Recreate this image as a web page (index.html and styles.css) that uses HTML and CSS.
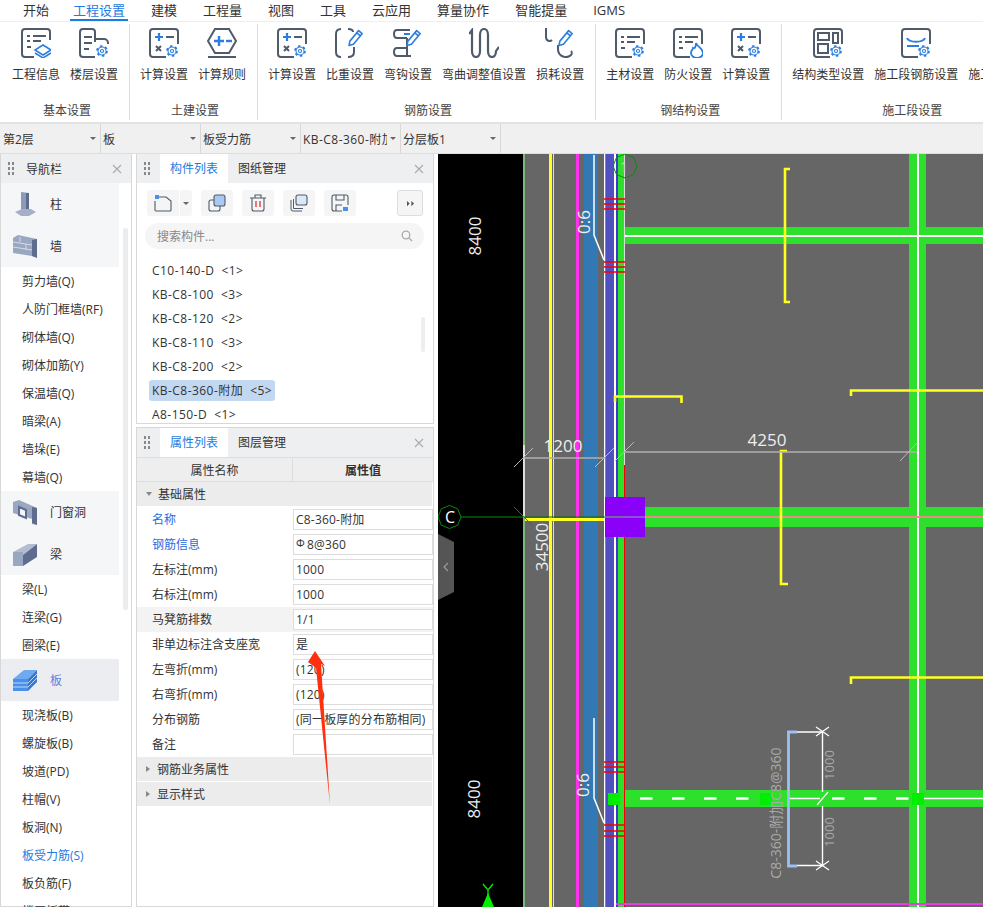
FILE: index.html
```html
<!DOCTYPE html>
<html lang="zh">
<head>
<meta charset="utf-8">
<title>工程设置</title>
<link rel="stylesheet" href="styles.css">
</head>
<body>
<svg class="defs" width="0" height="0">
  <symbol id="gear" viewBox="0 0 16 16">
    <circle cx="8" cy="8" r="5.4" fill="#fff" stroke="#2b7de0" stroke-width="2.6" stroke-dasharray="2.6 3.05"/>
    <circle cx="8" cy="8" r="4.6" fill="#fff" stroke="#2b7de0" stroke-width="1.2"/>
    <circle cx="8" cy="8" r="1.8" fill="none" stroke="#2b7de0" stroke-width="1.2"/>
  </symbol>
  <symbol id="frame" viewBox="0 0 30 30">
    <path d="M29 16V4a3 3 0 0 0-3-3H4a3 3 0 0 0-3 3v22a3 3 0 0 0 3 3h13" fill="none" stroke="#4f5a6b" stroke-width="2"/>
  </symbol>
  <symbol id="list" viewBox="0 0 30 30">
    <path d="M6 9h3M12 9h13M6 14h3M12 14h8M6 20h4" fill="none" stroke="#4f5a6b" stroke-width="2"/>
  </symbol>
  <symbol id="calc" viewBox="0 0 30 30">
    <use href="#frame" width="30" height="30"/>
    <path d="M6 9h8M10 5v8" fill="none" stroke="#2b7de0" stroke-width="2.2"/>
    <path d="M17 9h8M7 18l5 5M12 18l-5 5" fill="none" stroke="#4f5a6b" stroke-width="2"/>
    <use href="#gear" x="16" y="16" width="14" height="14"/>
  </symbol>
  <symbol id="pencil" viewBox="0 0 20 24">
    <path d="M3 15 13 3l4 3.500L7 18.500l-5 1.500zM11 5.500l4 3.500" fill="#fff" stroke="#2b7de0" stroke-width="1.800" stroke-linejoin="round"/>
  </symbol>
</svg>

<div class="app">
  <nav class="menu">
    <span class="menu-item menu-first">开始</span>
    <span class="menu-item menu-active">工程设置</span>
    <span class="menu-item">建模</span>
    <span class="menu-item">工程量</span>
    <span class="menu-item">视图</span>
    <span class="menu-item">工具</span>
    <span class="menu-item">云应用</span>
    <span class="menu-item">算量协作</span>
    <span class="menu-item">智能提量</span>
    <span class="menu-item">IGMS</span>
  </nav>

  <section class="ribbon">
    <div class="group">
      <div class="group-btns">
        <div class="rb"><svg class="ico" viewBox="0 0 30 30"><path d="M29 12V4a3 3 0 0 0-3-3H4a3 3 0 0 0-3 3v22a3 3 0 0 0 3 3h9" fill="none" stroke="#4f5a6b" stroke-width="2"/><use href="#list" width="30" height="30" y="-1"/><path d="M22 17l8 5-8 5-8-5zM14 25l8 5 8-5" fill="#fff" stroke="#2b7de0" stroke-width="1.500"/></svg><span>工程信息</span></div>
        <div class="rb"><svg class="ico" viewBox="0 0 30 30"><path d="M16 14V4a3 3 0 0 0-3-3H4a3 3 0 0 0-3 3v22a3 3 0 0 0 3 3h12M16 11h9a4 4 0 0 1 4 4v1" fill="none" stroke="#4f5a6b" stroke-width="2"/><path d="M5 9h8M5 15h8M5 21h5" fill="none" stroke="#4f5a6b" stroke-width="2"/><use href="#gear" x="16" y="16" width="14" height="14"/></svg><span>楼层设置</span></div>
      </div>
      <div class="group-title">基本设置</div>
    </div>
    <div class="group">
      <div class="group-btns">
        <div class="rb"><svg class="ico" viewBox="0 0 30 30"><use href="#calc" width="30" height="30"/></svg><span>计算设置</span></div>
        <div class="rb"><svg class="ico" viewBox="0 0 30 30"><path d="M8 1h14l7 12-7 12H8L1 13zM1 29h28" fill="none" stroke="#4f5a6b" stroke-width="2"/><path d="M7 13h10M12 8v10" fill="none" stroke="#2b7de0" stroke-width="2.400"/><path d="M19 13h6" fill="none" stroke="#2b7de0" stroke-width="2.400"/></svg><span>计算规则</span></div>
      </div>
      <div class="group-title">土建设置</div>
    </div>
    <div class="group">
      <div class="group-btns">
        <div class="rb"><svg class="ico" viewBox="0 0 30 30"><use href="#calc" width="30" height="30"/></svg><span>计算设置</span></div>
        <div class="rb"><svg class="ico" viewBox="0 0 30 30"><path d="M6 1C2 1 1 3 1 6v18c0 4 2 5 5 5M13 1c3 0 5 1 5 3M19 19v5c0 3-2 5-6 5" fill="none" stroke="#4f5a6b" stroke-width="2"/><use href="#pencil" x="12" y="0" width="18" height="21"/></svg><span>比重设置</span></div>
        <div class="rb"><svg class="ico" viewBox="0 0 30 30"><path d="M17 2H4C0 2 0 10 4 10h10M14 20H4c-4 0-4 8 0 8h14M14 10v18" fill="none" stroke="#4f5a6b" stroke-width="2"/><path d="M11 6h6" stroke="#2b7de0" stroke-width="2"/><use href="#pencil" x="12" y="0" width="18" height="21"/></svg><span>弯钩设置</span></div>
        <div class="rb"><svg class="ico" viewBox="0 0 30 30"><path d="M0 6l3-4v21c0 8 8 8 8 0V7c0-8 8-8 8 0v16c0 8 8 8 8 0l3-4" fill="none" stroke="#4f5a6b" stroke-width="2.200"/></svg><span>弯曲调整值设置</span></div>
        <div class="rb"><svg class="ico" viewBox="0 0 30 30"><path d="M1 0v9c0 4 4 5 6 3M13 17v4c0 8 9 10 13 6 1-1 1-3 0-4" fill="none" stroke="#4f5a6b" stroke-width="2"/><use href="#pencil" x="12" y="0" width="18" height="21"/></svg><span>损耗设置</span></div>
      </div>
      <div class="group-title">钢筋设置</div>
    </div>
    <div class="group">
      <div class="group-btns">
        <div class="rb"><svg class="ico" viewBox="0 0 30 30"><use href="#frame" width="30" height="30"/><use href="#list" width="30" height="30"/><use href="#gear" x="16" y="16" width="14" height="14"/></svg><span>主材设置</span></div>
        <div class="rb"><svg class="ico" viewBox="0 0 30 30"><use href="#frame" width="30" height="30"/><use href="#list" width="30" height="30"/><path d="M23 15c1 4 7 5 7 10a6 5 0 0 1-12 0c0-3 2-3 2-5 2 1 3-2 3-5z" fill="#fff" stroke="#2b7de0" stroke-width="1.800"/></svg><span>防火设置</span></div>
        <div class="rb"><svg class="ico" viewBox="0 0 30 30"><use href="#calc" width="30" height="30"/></svg><span>计算设置</span></div>
      </div>
      <div class="group-title">钢结构设置</div>
    </div>
    <div class="group group-last">
      <div class="group-btns">
        <div class="rb"><svg class="ico" viewBox="0 0 30 30"><use href="#frame" width="30" height="30"/><path d="M5 5h11v7H5zM5 16h10v9H5zM20 5h5v10h-5z" fill="none" stroke="#4f5a6b" stroke-width="2"/><use href="#gear" x="16" y="16" width="14" height="14"/></svg><span>结构类型设置</span></div>
        <div class="rb"><svg class="ico" viewBox="0 0 30 30"><use href="#frame" width="30" height="30"/><path d="M6 10c2 5 16 5 18 0M6 18h12" fill="none" stroke="#2b7de0" stroke-width="2"/><use href="#gear" x="16" y="16" width="14" height="14"/></svg><span>施工段钢筋设置</span></div>
        <div class="rb"><svg class="ico" viewBox="0 0 30 30"></svg><span>施工段设置</span></div>
      </div>
      <div class="group-title">施工段设置</div>
    </div>
  </section>

  <section class="selectors">
    <div class="sel"><span class="sel-text">第2层</span><i class="caret"></i></div>
    <div class="sel"><span class="sel-text">板</span><i class="caret"></i></div>
    <div class="sel"><span class="sel-text">板受力筋</span><i class="caret"></i></div>
    <div class="sel"><span class="sel-text sel-spaced">KB-C8-360-附加</span><i class="caret"></i></div>
    <div class="sel"><span class="sel-text">分层板1</span><i class="caret"></i></div>
  </section>

  <main class="work">
    <aside class="nav panel">
      <header class="phead">
        <i class="dots"></i><span class="nav-title">导航栏</span>
        <svg class="close" viewBox="0 0 10 10"><path d="M1 1l8 8M9 1l-8 8"/></svg>
      </header>
      <div class="nav-body">
        <div class="nav-scroll"></div>
        <div class="cat"><svg class="cat-ico" viewBox="0 0 24 26"><path d="M8 1l8 1v18H8z" fill="#8e9bb8"/><path d="M13 2h3v18h-3z" fill="#5e6c90"/><path d="M2 21l7-3h9l5 3-7 4H8z" fill="#a5b0c8"/></svg><span>柱</span></div>
        <div class="cat"><svg class="cat-ico" viewBox="0 0 24 26"><path d="M0 5l5-3 19 4v18l-5-1L0 20z" fill="#9aa7c0"/><path d="M19 7l5-1v19l-5-2z" fill="#5e6c90"/><path d="M0 9l19 3M0 14l19 3M7 4v5M13 11v6" stroke="#d4dae6" fill="none"/></svg><span>墙</span></div>
        <div class="sub">剪力墙(Q)</div>
        <div class="sub">人防门框墙(RF)</div>
        <div class="sub">砌体墙(Q)</div>
        <div class="sub">砌体加筋(Y)</div>
        <div class="sub">保温墙(Q)</div>
        <div class="sub">暗梁(A)</div>
        <div class="sub">墙垛(E)</div>
        <div class="sub">幕墙(Q)</div>
        <div class="cat"><svg class="cat-ico" viewBox="0 0 24 26"><path d="M0 3l6-2 18 8v17l-5-1V20L0 14z" fill="#9aa7c0"/><path d="M6 8l7 3v8l-7-3z" fill="#f5f6f8" stroke="#5e6c90" stroke-width="2"/><path d="M19 8l5 1v17l-5-2z" fill="#5e6c90"/></svg><span>门窗洞</span></div>
        <div class="cat"><svg class="cat-ico" viewBox="0 0 24 26"><path d="M0 11l15-8h9L10 14z" fill="#b4bdd0"/><path d="M0 11h10v14H0z" fill="#9aa7c0"/><path d="M10 14 24 3v13L10 25z" fill="#5e6c90"/></svg><span>梁</span></div>
        <div class="sub">梁(L)</div>
        <div class="sub">连梁(G)</div>
        <div class="sub">圈梁(E)</div>
        <div class="cat cat-on"><svg class="cat-ico" viewBox="0 0 24 26"><path d="M0 12 11 3h13L15 12z" fill="#6ea9f2"/><path d="M0 12h15v12H0z" fill="#4a90ea"/><path d="M15 12l9-9v12l-9 9z" fill="#3377d6"/><path d="M0 16h15M0 20h15M15 16l9-9M15 20l9-9" stroke="#bcd6f6" fill="none"/></svg><span>板</span></div>
        <div class="sub">现浇板(B)</div>
        <div class="sub">螺旋板(B)</div>
        <div class="sub">坡道(PD)</div>
        <div class="sub">柱帽(V)</div>
        <div class="sub">板洞(N)</div>
        <div class="sub sub-on">板受力筋(S)</div>
        <div class="sub">板负筋(F)</div>
        <div class="sub">楼层板带(H)</div>
      </div>
    </aside>

    <div class="mid">
      <section class="panel comp">
        <header class="phead">
          <i class="dots"></i>
          <span class="tab tab-on">构件列表</span><span class="tab">图纸管理</span>
          <svg class="close" viewBox="0 0 10 10"><path d="M1 1l8 8M9 1l-8 8"/></svg>
        </header>
        <div class="tools">
          <div class="tbtn tbtn-new"><svg class="tico" viewBox="0 0 18 18"><path d="M4 3h8l5 4v9a1 1 0 0 1-1 1H2a1 1 0 0 1-1-1V7" fill="none" stroke="#4f5a6b" stroke-width="1.100"/><path d="M1 1h4v4H1z" fill="#4a8fe8"/></svg></div>
          <div class="tbtn tbtn-caret"><i class="caret"></i></div>
          <div class="tbtn"><svg class="tico" viewBox="0 0 18 18"><rect x="1" y="6" width="11" height="11" rx="2" fill="none" stroke="#4f5a6b" stroke-width="1.100"/><rect x="6" y="1" width="11" height="11" rx="2" fill="#a9c9f2" stroke="#4f5a6b" stroke-width="1.100"/></svg></div>
          <div class="tbtn"><svg class="tico" viewBox="0 0 18 18"><path d="M1 4h16M6 4V1h6v3M3 4v11a2 2 0 0 0 2 2h8a2 2 0 0 0 2-2V4" fill="none" stroke="#4f5a6b" stroke-width="1.100"/><path d="M7 7v6M11 7v6" stroke="#e02020" stroke-width="1.200"/></svg></div>
          <div class="tbtn"><svg class="tico" viewBox="0 0 18 18"><path d="M1 6v9a2 2 0 0 0 2 2h9M3.500 5v9.500H13" fill="none" stroke="#4f5a6b" stroke-width="1"/><rect x="6" y="1" width="11" height="10" rx="2" fill="#dbe8f8" stroke="#4f5a6b" stroke-width="1.100"/></svg></div>
          <div class="tbtn"><svg class="tico" viewBox="0 0 18 18"><path d="M11 17H3a2 2 0 0 1-2-2V3a2 2 0 0 1 2-2h12a2 2 0 0 1 2 2v8M5 1v5h8V1M5 17v-6h6" fill="none" stroke="#4f5a6b" stroke-width="1.100"/><path d="M12 13h5v4h-5z" fill="#4a8fe8"/></svg></div>
          <div class="tbtn tbtn-more"><svg class="more" viewBox="0 0 10 8"><path d="M1 1l3 3-3 3zM6 1l3 3-3 3z" fill="#555"/></svg></div>
        </div>
        <div class="search"><span class="search-ph">搜索构件...</span><svg class="search-ico" viewBox="0 0 12 12"><circle cx="5" cy="5" r="3.800" fill="none" stroke="#aaa" stroke-width="1.300"/><path d="M8 8l3 3" stroke="#aaa" stroke-width="1.300"/></svg></div>
        <div class="list">
          <div class="list-scroll"></div>
          <div class="li"><span class="li-t">C10-140-D&nbsp;&nbsp;&lt;1&gt;</span></div>
          <div class="li"><span class="li-t">KB-C8-100&nbsp;&nbsp;&lt;3&gt;</span></div>
          <div class="li"><span class="li-t">KB-C8-120&nbsp;&nbsp;&lt;2&gt;</span></div>
          <div class="li"><span class="li-t">KB-C8-110&nbsp;&nbsp;&lt;3&gt;</span></div>
          <div class="li"><span class="li-t">KB-C8-200&nbsp;&nbsp;&lt;2&gt;</span></div>
          <div class="li"><span class="li-t li-on">KB-C8-360-附加&nbsp;&nbsp;&lt;5&gt;</span></div>
          <div class="li"><span class="li-t">A8-150-D&nbsp;&nbsp;&lt;1&gt;</span></div>
        </div>
      </section>

      <section class="panel props">
        <header class="phead">
          <i class="dots"></i>
          <span class="tab tab-on">属性列表</span><span class="tab">图层管理</span>
          <svg class="close" viewBox="0 0 10 10"><path d="M1 1l8 8M9 1l-8 8"/></svg>
        </header>
        <div class="thead"><div class="th-name">属性名称</div><div class="th-val">属性值</div></div>
        <div class="pgroup"><i class="tri tri-down"></i><span class="pg-t">基础属性</span></div>
        <div class="row"><div class="rn rn-blue">名称</div><div class="rv">C8-360-附加</div></div>
        <div class="row"><div class="rn rn-blue">钢筋信息</div><div class="rv"><span class="steel">Φ</span>8@360</div></div>
        <div class="row"><div class="rn">左标注(mm)</div><div class="rv">1000</div></div>
        <div class="row"><div class="rn">右标注(mm)</div><div class="rv">1000</div></div>
        <div class="row row-alt"><div class="rn">马凳筋排数</div><div class="rv">1/1</div></div>
        <div class="row"><div class="rn">非单边标注含支座宽</div><div class="rv">是</div></div>
        <div class="row"><div class="rn">左弯折(mm)</div><div class="rv">(120)</div></div>
        <div class="row"><div class="rn">右弯折(mm)</div><div class="rv">(120)</div></div>
        <div class="row"><div class="rn">分布钢筋</div><div class="rv">(同一板厚的分布筋相同)</div></div>
        <div class="row"><div class="rn">备注</div><div class="rv"></div></div>
        <div class="pgroup"><i class="tri"></i><span class="pg-t">钢筋业务属性</span></div>
        <div class="pgroup"><i class="tri"></i><span class="pg-t">显示样式</span></div>
      </section>
    </div>

    <div class="canvas">
      <svg class="cad" viewBox="438 154 545 753" width="545" height="753">
        <rect x="438" y="154" width="545" height="753" fill="#000"/>
        <rect x="524" y="154" width="459" height="753" fill="#666"/>

        <!-- horizontal beams -->
        <rect x="624" y="227" width="359" height="17" fill="#2ce02c"/>
        <rect x="645" y="507" width="338" height="20" fill="#2ce02c"/>
        <rect x="625" y="790" width="358" height="17" fill="#2ce02c"/>
        <rect x="909" y="154" width="17" height="753" fill="#2ce02c"/>
        <rect x="917" y="154" width="2" height="753" fill="#fff"/>
        <rect x="615" y="235" width="368" height="2" fill="#fff"/>
        <rect x="645" y="516" width="338" height="2" fill="#e88"/>

        <!-- vertical strips -->
        <rect x="523" y="154" width="2" height="753" fill="#7cb87c"/>
        <rect x="523" y="445" width="2" height="73" fill="#ddd"/>
        <rect x="549" y="154" width="3" height="753" fill="#ffff20"/>
        <rect x="553" y="154" width="1" height="753" fill="#ddd"/>
        <rect x="576" y="154" width="3" height="753" fill="#ff30f0"/>
        <rect x="584" y="154" width="14" height="753" fill="#3278b4"/>
        <rect x="604" y="154" width="1.500" height="753" fill="#fff"/>
        <rect x="605.500" y="154" width="8.500" height="753" fill="#5050c0"/>
        <rect x="614" y="154" width="2" height="753" fill="#fff"/>
        <rect x="616" y="154" width="2" height="753" fill="#3c3cc8"/>
        <rect x="618" y="154" width="6" height="753" fill="#2ce02c"/>
        <rect x="624" y="154" width="1" height="311" fill="#ddd"/>
        <rect x="624" y="465" width="1" height="442" fill="#f00000"/>

        <!-- magenta base line -->
        <rect x="616" y="903" width="367" height="2" fill="#e040e0"/>

        <!-- yellow brackets -->
        <path d="M790 169h-5v133h5M787 451h-6v133h7M615 402v-5.500h66.500v6.500M851 396v-5.500h132M851 684v-6.500h132" fill="none" stroke="#ffff20" stroke-width="2.600"/>
        <path d="M525 519.500h79" stroke="#ffff20" stroke-width="3"/>

        <!-- purple column -->
        <rect x="605" y="497" width="40" height="40" fill="#8a00f8"/>
        <path d="M525 517h100" stroke="#0a6a0a" stroke-width="1"/>
        <path d="M605 517h40" stroke="#9a9ac8" stroke-width="1"/>

        <!-- red ticks -->
        <path d="M604 199h21M604 204h21M604 209h21M604 262h21M604 267h21M604 272h21M604 762h20M604 767h20M604 772h20M604 825h20M604 831h20M604 836h20" stroke="#f40000" stroke-width="1.600"/>

        <!-- leaders -->
        <path d="M594 155v80l10 25M594 718v80l10 25" fill="none" stroke="#fff" stroke-width="1.500"/>
        <text class="cad-t" transform="rotate(-90 583 222)" x="583" y="222">0:6</text>
        <text class="cad-t" transform="rotate(-90 582 785)" x="582" y="785">0:6</text>

        <!-- dimensions -->
        <path d="M523 458h82M624 452h293" stroke="#b0b0b0" stroke-width="1.400"/>
        <path d="M514 467l19-19M595 467l19-19M615 461l19-19M900 461l17-18" stroke="#bbb" stroke-width="1"/>
        <text class="cad-t" x="563" y="445">1200</text>
        <text class="cad-t" x="767" y="439">4250</text>
        <text class="cad-t" transform="rotate(-90 541 547)" x="541" y="547">34500</text>
        <text class="cad-t" transform="rotate(-90 474 236)" x="474" y="236">8400</text>
        <text class="cad-t" transform="rotate(-90 473 799)" x="473" y="799">8400</text>

        <!-- axis bubbles -->
        <path d="M637 166l-3.500-8.500-8.500-3.500-8.500 3.500-3.500 8.500 3.500 8.500 8.500 3.500 8.500-3.500z" fill="none" stroke="#0a8a0a"/>
        <text class="cad-a" x="624" y="166">1</text>
        <path d="M461 517l-3.400-8.200-8.100-3.300-8.100 3.300-3.400 8.200 3.400 8.200 8.100 3.300 8.100-3.300zM461 517h64M514 507l19 19" fill="none" stroke="#0a8a0a"/>
        <text class="cad-a cad-c" x="450" y="517">C</text>

        <!-- rebar with dashes -->
        <path d="M640 798.500h124" stroke="#fff" stroke-width="2.600" stroke-dasharray="12.500 19.500"/>
        <path d="M832 798.500h77" stroke="#fff" stroke-width="2.600" stroke-dasharray="12.500 19.500"/>
        <path d="M788 798.500h32M924 798.500h59" stroke="#fff" stroke-width="1.600"/>
        <rect x="608" y="793" width="12" height="12" fill="#00ee00"/>
        <rect x="760" y="793" width="12" height="12" fill="#00ee00"/>
        <rect x="912" y="793" width="12" height="12" fill="#00ee00"/>
        <path d="M797 732h26M797 865.500h26M822.500 732v60M822.500 806v60" fill="none" stroke="#fff" stroke-width="1.400"/>
        <path d="M816 727l13 9M816 736l13-9M816 861l13 9M816 870l13-9M817 805l11-13" stroke="#fff" stroke-width="1.200"/>
        <path d="M797 732h-8.500v134h8.500" fill="none" stroke="#9cc0f0" stroke-width="2.800"/>
        <text class="cad-g" transform="rotate(-90 829 765)" x="829" y="765">1000</text>
        <text class="cad-g" transform="rotate(-90 829 832)" x="829" y="832">1000</text>
        <text class="cad-l" transform="rotate(-90 775 813)" x="775" y="813">C8-360-附加C8@360</text>

        <!-- Y axis -->
        <path d="M483 884l5 6 5-6M488 890v6" fill="none" stroke="#00ee00" stroke-width="1.300"/>
        <path d="M488 893l6 14h-12z" fill="#00ee00"/>
      </svg>
      <div class="handle"><svg class="handle-ico" viewBox="0 0 6 10"><path d="M5 1 1 5l4 4" fill="none" stroke="#999" stroke-width="1.200"/></svg></div>
    </div>
  </main>

  <svg class="arrow" viewBox="0 0 30 160" width="30" height="160"><path d="M9 0l10 15-4-2 9 141L10 17 2 11z" fill="#ff3010"/></svg>
</div>
</body>
</html>
```
FILE: styles.css
```css
* { box-sizing: border-box; }
html, body { margin: 0; padding: 0; }
body {
  width: 983px;
  height: 907px;
  overflow: hidden;
  background: #fff;
  color: #333;
  font-family: "Open Sans", "Noto Sans CJK SC", sans-serif;
  font-size: 12px;
}
.defs { position: absolute; }
.app { position: relative; width: 983px; height: 907px; display: flex; flex-direction: column; overflow: hidden; }

/* top menu */
.menu { height: 22px; display: flex; gap: 26px; padding-left: 23px; border-bottom: 1px solid #eee; flex: none; }
.menu-item { font-size: 13px; line-height: 20px; height: 21px; white-space: nowrap; position: relative; }
.menu-first { margin-right: -2px; }
.menu-active { color: #1e7be0; }
.menu-active::after { content: ""; position: absolute; left: -3px; right: -3px; bottom: 0; height: 2px; background: #1e7be0; }

/* ribbon */
.ribbon { height: 100px; display: flex; flex: none; padding-left: 1px; overflow: hidden; }
.group { display: flex; flex-direction: column; padding: 4px 11px 0 10px; border-right: 1px solid #ddd; height: 96px; margin-top: 2px; flex: none; }
.group:first-child { padding-left: 11px; }
.group-last { border-right: 0; }
.group-btns { display: flex; gap: 10px; height: 75px; }
.rb { display: flex; flex-direction: column; align-items: center; white-space: nowrap; }
.rb span { line-height: 16px; margin-top: 9px; }
.ico { width: 30px; height: 30px; display: block; }
.group-title { text-align: center; line-height: 16px; padding-left: 4px; color: #444; }

/* selector strip */
.selectors { height: 32px; flex: none; display: flex; background: #f0f0f0; border-top: 2px solid #e2e2e2; border-bottom: 1px solid #ddd; padding-left: 1px; }
.sel { width: 100px; padding-left: 2px; display: flex; align-items: center; justify-content: space-between; border-right: 1px solid #d8d8d8; padding-right: 4px; }
.sel-text { width: 84px; overflow: hidden; white-space: nowrap; }
.sel-spaced { letter-spacing: .45px; }
.caret { width: 0; height: 0; border-left: 3px solid transparent; border-right: 3px solid transparent; border-top: 3px solid #666; display: block; flex: none; }

/* workspace */
.work { flex: 1; display: flex; min-height: 0; }
.panel { border: 1px solid #d8d8d8; background: #fff; }
.phead { height: 29px; background: #eeeff1; display: flex; align-items: center; position: relative; flex: none; }
.dots { width: 7px; height: 15px; margin-left: 6px; background-image: radial-gradient(circle, #888 1.200px, transparent 1.400px); background-size: 4px 5px; flex: none; }
.close { width: 10px; height: 10px; stroke: #aaa; stroke-width: 1.100; fill: none; position: absolute; right: 9px; top: 10px; }

/* nav */
.nav { width: 132px; margin-left: 0; border-top: 0; flex: none; }
.nav-title { margin-left: 12px; }
.nav-body { position: relative; height: 724px; overflow: hidden; }
.nav-scroll { position: absolute; left: 122px; top: 45px; width: 5px; height: 382px; background: #ececec; border-radius: 2px; }
.cat { width: 118px; height: 42px; background: #f5f6f8; display: flex; align-items: center; padding-left: 12px; }
.cat span { margin-left: 13px; }
.cat-ico { width: 24px; height: 26px; flex: none; }
.cat-on { background: #ecedf1; color: #5f7fe0; }
.sub { height: 28px; line-height: 30px; padding-left: 21px; white-space: nowrap; }
.sub-on { color: #1e7be0; }

/* middle column */
.mid { width: 298px; margin-left: 4px; flex: none; display: flex; flex-direction: column; gap: 3px; }
.comp { height: 270px; border-top: 0; display: flex; flex-direction: column; }
.props { flex: 1; display: flex; flex-direction: column; }
.mid .dots { margin-right: 10px; }
.tab { width: 68px; height: 29px; line-height: 29px; text-align: center; flex: none; }
.tab-on { background: #fff; color: #1e7be0; }

.tools { display: flex; padding: 7px 10px 0; height: 40px; flex: none; }
.tbtn { width: 32px; height: 26px; background: #f5f5f5; border-radius: 3px; display: flex; align-items: center; justify-content: center; margin-right: 9px; flex: none; }
.tbtn-new { margin-right: 1px; border-radius: 3px 0 0 3px; }
.tbtn-caret { width: 12px; border-radius: 0 3px 3px 0; }
.tbtn-more { width: 26px; margin: 0 0 0 32px; border: 1px solid #ddd; }
.tico { width: 18px; height: 18px; }
.more { width: 9px; height: 7px; }
.search { height: 26px; margin: 0 9px 0 8px; background: #f5f5f5; border-radius: 13px; display: flex; align-items: center; justify-content: space-between; padding: 0 11px 0 12px; flex: none; }
.search-ph { color: #888; }
.search-ico { width: 12px; height: 12px; }
.list { position: relative; padding: 9px 0 0 12px; flex: 1; overflow: hidden; }
.list-scroll { position: absolute; left: 284px; top: 68px; width: 4px; height: 35px; background: #eee; border-radius: 2px; }
.li { height: 24px; display: flex; align-items: center; letter-spacing: .45px; }
.li-t { padding: 0 3px; height: 21px; line-height: 21px; border-radius: 3px; white-space: nowrap; }
.li-on { background: #c2d8f0; }

/* property table */
.thead { display: flex; height: 25px; background: #eee; border-top: 1px solid #ddd; border-bottom: 1px solid #ddd; flex: none; line-height: 25px; text-align: center; }
.th-name { width: 156px; border-right: 1px solid #ddd; }
.th-val { flex: 1; font-weight: 700; }
.pgroup { height: 24px; margin-bottom: 1px; background: #ececec; display: flex; align-items: center; width: 295px; flex: none; }
.pg-t { line-height: 26px; height: 24px; }
.tri { width: 0; height: 0; margin: 0 7px 0 9px; border-top: 3px solid transparent; border-bottom: 3px solid transparent; border-left: 4px solid #888; flex: none; }
.tri-down { border-left: 3px solid transparent; border-right: 3px solid transparent; border-top: 4px solid #888; border-bottom: 0; margin-right: 6px; }
.row { height: 25px; display: flex; align-items: center; width: 296px; flex: none; }
.row-alt { background: #f3f3f3; }
.rn { width: 156px; padding-left: 15px; padding-bottom: 2px; white-space: nowrap; }
.rn-blue { color: #2a6ae0; }
.rv { width: 140px; height: 21px; line-height: 19px; border: 1px solid #ddd; background: #fff; padding-left: 2px; white-space: nowrap; overflow: hidden; letter-spacing: .2px; }
.steel { font-size: 11px; position: relative; top: -2px; margin-right: 2px; }

/* canvas */
.canvas { position: relative; margin-left: 4px; width: 545px; height: 753px; flex: none; overflow: hidden; background: #000; }
.cad { display: block; }
.cad text { font-family: "Open Sans", "Noto Sans CJK SC", sans-serif; text-anchor: middle; dominant-baseline: central; }
.cad-t { font-size: 17px; fill: #eee; }
.cad-a { font-size: 14px; fill: #ccc; }
.cad-c { fill: #fff; font-size: 16px; }
.cad-g { font-size: 13px; fill: #aaa; }
.cad-l { font-size: 14px; fill: #aaa; }
.handle { position: absolute; left: 0; top: 380px; width: 16px; height: 66px; background: #555; clip-path: polygon(0 0, 100% 12%, 100% 88%, 0 100%); display: flex; align-items: center; justify-content: center; }
.handle-ico { width: 6px; height: 10px; }

/* annotation arrow */
.arrow { position: absolute; left: 306px; top: 651px; }
```
